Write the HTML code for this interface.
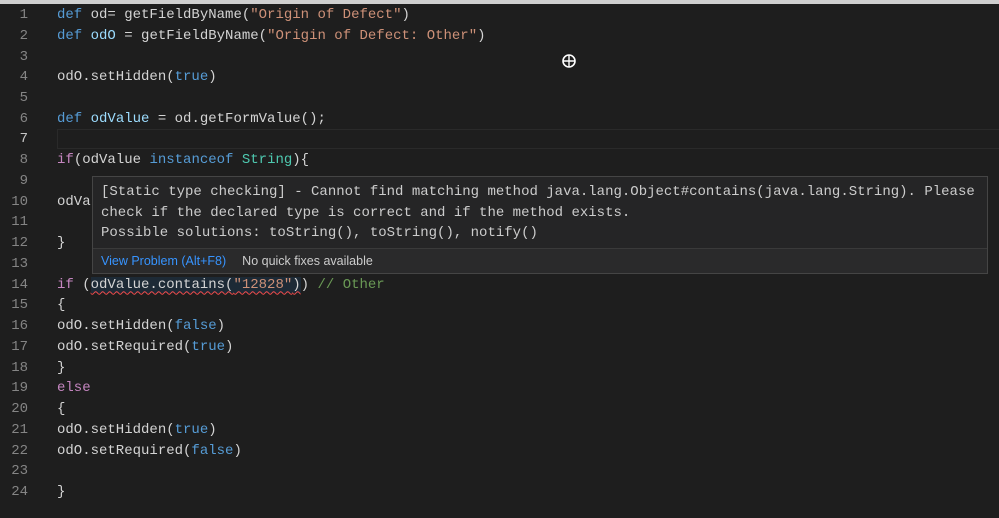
<!DOCTYPE html>
<html><head><meta charset="utf-8"><style>
*{margin:0;padding:0;box-sizing:border-box}
body{width:999px;height:518px;background:#1e1e1e;overflow:hidden;position:relative;font-family:"Liberation Mono",monospace;font-size:14px;color:#d4d4d4}
.top{position:absolute;left:0;top:0;width:999px;height:4px;background:#cfcfcf}
.ln{position:absolute;left:0;width:28px;text-align:right;color:#858585;height:21px;line-height:21px}
.c{position:absolute;left:57px;white-space:pre;height:21px;line-height:21px}
.k{color:#569cd6}.v{color:#9cdcfe}.s{color:#ce9178}.p{color:#c586c0}.t{color:#4ec9b0}.m{color:#6a9955}
.cur{position:absolute;left:57px;top:129px;width:942px;height:20px;border:1px solid #2a2a2a;border-right:none}
.tip{position:absolute;left:92px;top:176px;width:896px;height:98px;background:#252526;border:1px solid #454545}
.tip .txt{position:absolute;left:8px;top:5px;white-space:pre;line-height:20.7px;color:#cccccc}
.tip .bar{position:absolute;left:0;top:71px;width:100%;height:25px;border-top:1px solid #3a3a3a;background:#2a2a2b;font-family:"Liberation Sans",sans-serif;font-size:12.5px;line-height:25px;padding-left:8px;color:#cccccc}
.tip .bar span{color:#3794ff;margin-right:16px}
.hl{background:#1d2a36}
.sq{text-decoration:underline wavy #f14c4c;text-underline-offset:3px;text-decoration-thickness:1px}
</style></head><body>
<div class="top"></div>
<div class="cur"></div>
<div class="ln" style="top:5px">1</div><div class="c" style="top:5px"><span class="k">def</span> od= getFieldByName(<span class="s">"Origin of Defect"</span>)</div>
<div class="ln" style="top:25.7px">2</div><div class="c" style="top:25.7px"><span class="k">def</span> <span class="v">odO</span> = getFieldByName(<span class="s">"Origin of Defect: Other"</span>)</div>
<div class="ln" style="top:46.5px">3</div>
<div class="ln" style="top:67.2px">4</div><div class="c" style="top:67.2px">odO.setHidden(<span class="k">true</span>)</div>
<div class="ln" style="top:88px">5</div>
<div class="ln" style="top:108.7px">6</div><div class="c" style="top:108.7px"><span class="k">def</span> <span class="v">odValue</span> = od.getFormValue();</div>
<div class="ln" style="top:129.4px;color:#c6c6c6">7</div>
<div class="ln" style="top:150.2px">8</div><div class="c" style="top:150.2px"><span class="p">if</span>(odValue <span class="k">instanceof</span> <span class="t">String</span>){</div>
<div class="ln" style="top:170.9px">9</div>
<div class="ln" style="top:191.6px">10</div><div class="c" style="top:191.6px">odValue</div>
<div class="ln" style="top:212.4px">11</div>
<div class="ln" style="top:233.1px">12</div><div class="c" style="top:233.1px">}</div>
<div class="ln" style="top:253.9px">13</div>
<div class="ln" style="top:274.6px">14</div><div class="c" style="top:274.6px"><span class="p">if</span> (<span class="hl sq">odValue.contains(<span class="s">"12828"</span>)</span>) <span class="m">// Other</span></div>
<div class="ln" style="top:295.3px">15</div><div class="c" style="top:295.3px">{</div>
<div class="ln" style="top:316.1px">16</div><div class="c" style="top:316.1px">odO.setHidden(<span class="k">false</span>)</div>
<div class="ln" style="top:336.8px">17</div><div class="c" style="top:336.8px">odO.setRequired(<span class="k">true</span>)</div>
<div class="ln" style="top:357.5px">18</div><div class="c" style="top:357.5px">}</div>
<div class="ln" style="top:378.3px">19</div><div class="c" style="top:378.3px"><span class="p">else</span></div>
<div class="ln" style="top:399px">20</div><div class="c" style="top:399px">{</div>
<div class="ln" style="top:419.8px">21</div><div class="c" style="top:419.8px">odO.setHidden(<span class="k">true</span>)</div>
<div class="ln" style="top:440.5px">22</div><div class="c" style="top:440.5px">odO.setRequired(<span class="k">false</span>)</div>
<div class="ln" style="top:461.2px">23</div>
<div class="ln" style="top:482px">24</div><div class="c" style="top:482px">}</div>
<svg style="position:absolute;left:561px;top:53px" width="16" height="16" viewBox="0 0 16 16"><circle cx="8" cy="8" r="6" fill="none" stroke="#fff" stroke-width="1.6"/><path d="M8 2.5V13.5M2.5 8H13.5" stroke="#fff" stroke-width="1.4"/></svg>
<div class="tip">
<div class="txt">[Static type checking] - Cannot find matching method java.lang.Object#contains(java.lang.String). Please
check if the declared type is correct and if the method exists.
Possible solutions: toString(), toString(), notify()</div>
<div class="bar"><span>View Problem (Alt+F8)</span>No quick fixes available</div>
</div>
</body></html>
